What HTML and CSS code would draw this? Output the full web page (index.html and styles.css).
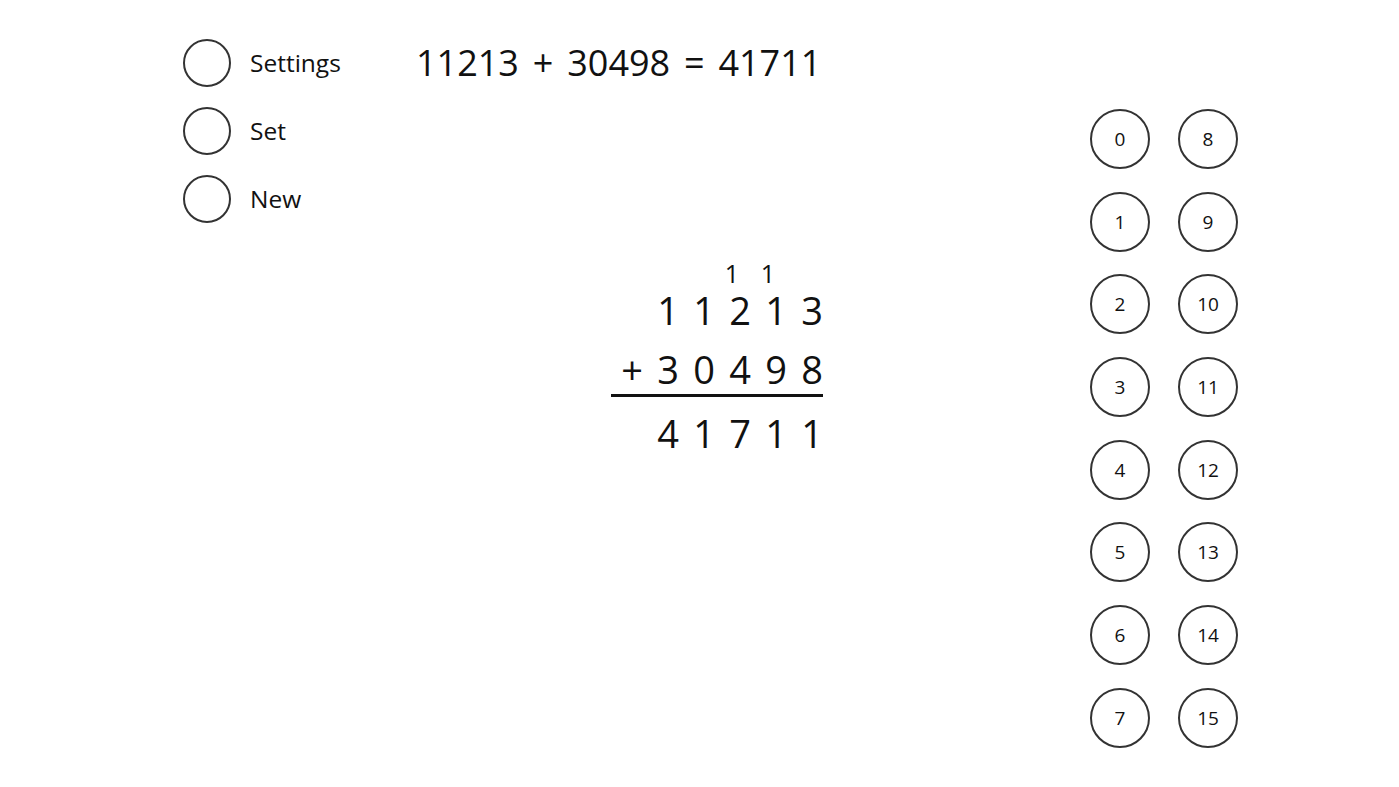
FILE: index.html
```html
<!DOCTYPE html>
<html lang="en">
<head>
<meta charset="utf-8">
<title>Addition</title>
<link rel="stylesheet" href="styles.css">
</head>
<body>
<div class="app">
  <nav class="menu">
    <div class="menu-item"><span class="radio"></span><span class="menu-label">Settings</span></div>
    <div class="menu-item"><span class="radio"></span><span class="menu-label">Set</span></div>
    <div class="menu-item"><span class="radio"></span><span class="menu-label">New</span></div>
  </nav>
  <main class="work">
    <div class="equation">11213 + 30498 = 41711</div>
    <div class="sum">
      <div class="row carry-row"><span></span><span></span><span></span><span>1</span><span>1</span><span></span></div>
      <div class="row digits top-row"><span></span><span>1</span><span>1</span><span>2</span><span>1</span><span>3</span></div>
      <div class="row digits"><span>+</span><span>3</span><span>0</span><span>4</span><span>9</span><span>8</span></div>
      <div class="rule"></div>
      <div class="row digits result-row"><span></span><span>4</span><span>1</span><span>7</span><span>1</span><span>1</span></div>
    </div>
  </main>
  <aside class="keypad">
    <button class="key">0</button><button class="key">8</button>
    <button class="key">1</button><button class="key">9</button>
    <button class="key">2</button><button class="key">10</button>
    <button class="key">3</button><button class="key">11</button>
    <button class="key">4</button><button class="key">12</button>
    <button class="key">5</button><button class="key">13</button>
    <button class="key">6</button><button class="key">14</button>
    <button class="key">7</button><button class="key">15</button>
  </aside>
</div>
</body>
</html>
```
FILE: styles.css
```css
* { box-sizing: border-box; }
html, body { margin: 0; padding: 0; background: #fff; }
body {
  font-family: "Open Sans", "Noto Sans", sans-serif;
  color: #111;
  width: 1399px;
  height: 787px;
  overflow: hidden;
}
.app {
  display: flex;
  align-items: flex-start;
  padding: 39px 0 0 183px;
}
.menu {
  width: 233px;
  display: flex;
  flex-direction: column;
  gap: 20px;
}
.menu-item {
  display: flex;
  align-items: center;
  gap: 19px;
  height: 48px;
}
.radio {
  width: 48px;
  height: 48px;
  border: 2px solid #333;
  border-radius: 50%;
  flex: none;
}
.menu-label {
  font-size: 24.5px;
  line-height: 32px;
  color: #111;
}
.work {
  width: 414px;
  display: flex;
  flex-direction: column;
}
.equation {
  font-size: 36px;
  line-height: 48px;
  height: 48px;
  word-spacing: 4.5px;
  white-space: nowrap;
}
.sum {
  align-self: flex-end;
  width: 216px;
  margin-top: 172px;
}
.row {
  display: grid;
  grid-template-columns: repeat(6, 36px);
  text-align: center;
}
.carry-row {
  font-size: 25px;
  line-height: 29px;
  height: 29px;
  margin-left: -8px;
  margin-right: 8px;
}
.digits {
  font-size: 38px;
  line-height: 44px;
  height: 44px;
}
.top-row { margin-bottom: 15px; }
.rule {
  height: 3px;
  background: #111;
  width: 212px;
  margin: 3px 0 14px -3px;
}
.keypad {
  margin-left: 260px;
  margin-top: 70px;
  display: grid;
  grid-template-columns: 60px 60px;
  column-gap: 28px;
  row-gap: 22.7px;
}
.key {
  width: 60px;
  height: 60px;
  border: 2px solid #333;
  border-radius: 50%;
  background: #fff;
  font-family: "Open Sans", "Noto Sans", sans-serif;
  font-size: 19px;
  color: #111;
  padding: 0;
  display: flex;
  align-items: center;
  justify-content: center;
}
```
